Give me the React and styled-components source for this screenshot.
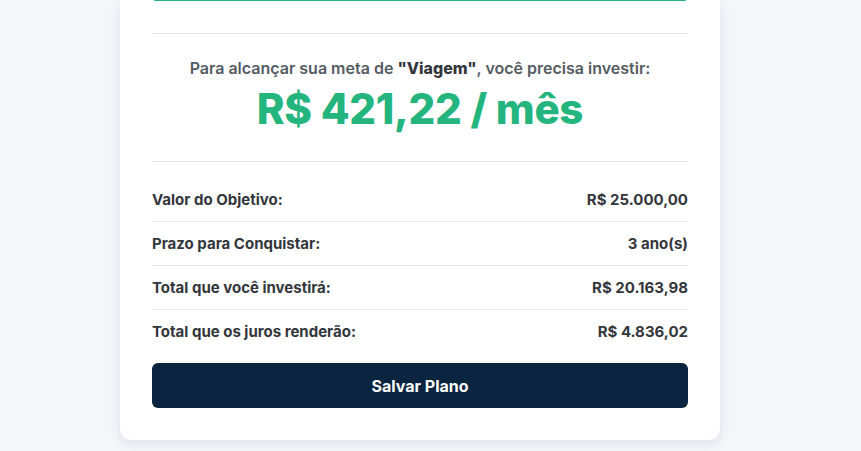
import React from "react";
import styled, { createGlobalStyle } from "styled-components";

const Global = createGlobalStyle`
  html, body { margin: 0; padding: 0; background: #f4f7fa; }
  body { font-family: Inter, "Noto Sans", Arial, sans-serif; -webkit-font-smoothing: antialiased; }
`;

const Page = styled.div`
  display: flex;
  padding: 0 0 10px 120px;
  min-height: 451px;
  box-sizing: border-box;
`;

const Card = styled.div`
  width: 600px;
  box-sizing: border-box;
  background: #ffffff;
  border-radius: 0 0 12px 12px;
  box-shadow: 0 4px 12px rgba(15, 30, 60, 0.1);
  padding: 0 32px 32px;
  align-self: flex-start;
`;

const ProgressEdge = styled.div`
  height: 1px;
  margin: 0 2px;
  background: #24b47e;
  border-radius: 0 0 2px 2px;
`;

const Divider = styled.hr`
  border: none;
  border-top: 1px solid #e6e8ec;
  margin: ${(p) => p.$top || 0}px 0 0;
`;

const Summary = styled.div`
  display: flex;
  flex-direction: column;
  align-items: center;
  padding: 23px 0 26px;
  text-align: center;
`;

const Lead = styled.p`
  margin: 0;
  font-size: 16px;
  line-height: 22px;
  font-weight: 600;
  color: #555b63;
  strong { color: #33373d; font-weight: 800; }
`;

const Amount = styled.div`
  margin-top: 4px;
  font-size: 42px;
  line-height: 52px;
  font-weight: 800;
  color: #24b47e;
  letter-spacing: -0.3px;
`;

const Details = styled.div`
  display: flex;
  flex-direction: column;
  padding-top: 16px;
`;

const Row = styled.div`
  display: flex;
  justify-content: space-between;
  align-items: center;
  padding: 11px 0;
  line-height: 21px;
  font-size: 15px;
  font-weight: 700;
  color: #33363b;
  border-bottom: ${(p) => (p.$last ? "none" : "1px solid #e6e8ec")};
`;

const SaveButton = styled.button`
  margin-top: 10px;
  width: 100%;
  height: 45px;
  border: none;
  border-radius: 6px;
  background: #0b2440;
  color: #ffffff;
  font-family: Inter, Arial, sans-serif;
  font-size: 16px;
  font-weight: 700;
  cursor: pointer;
`;

const rows = [
  ["Valor do Objetivo:", "R$ 25.000,00"],
  ["Prazo para Conquistar:", "3 ano(s)"],
  ["Total que você investirá:", "R$ 20.163,98"],
  ["Total que os juros renderão:", "R$ 4.836,02"],
];

export default function App() {
  return (
    <>
      <Global />
      <Page>
        <Card>
          <ProgressEdge />
          <Divider $top={32} />
          <Summary>
            <Lead>
              Para alcançar sua meta de <strong>"Viagem"</strong>, você precisa investir:
            </Lead>
            <Amount>R$ 421,22 / mês</Amount>
          </Summary>
          <Divider />
          <Details>
            {rows.map(([label, value], i) => (
              <Row key={label} $last={i === rows.length - 1}>
                <span>{label}</span>
                <span>{value}</span>
              </Row>
            ))}
          </Details>
          <SaveButton>Salvar Plano</SaveButton>
        </Card>
      </Page>
    </>
  );
}
